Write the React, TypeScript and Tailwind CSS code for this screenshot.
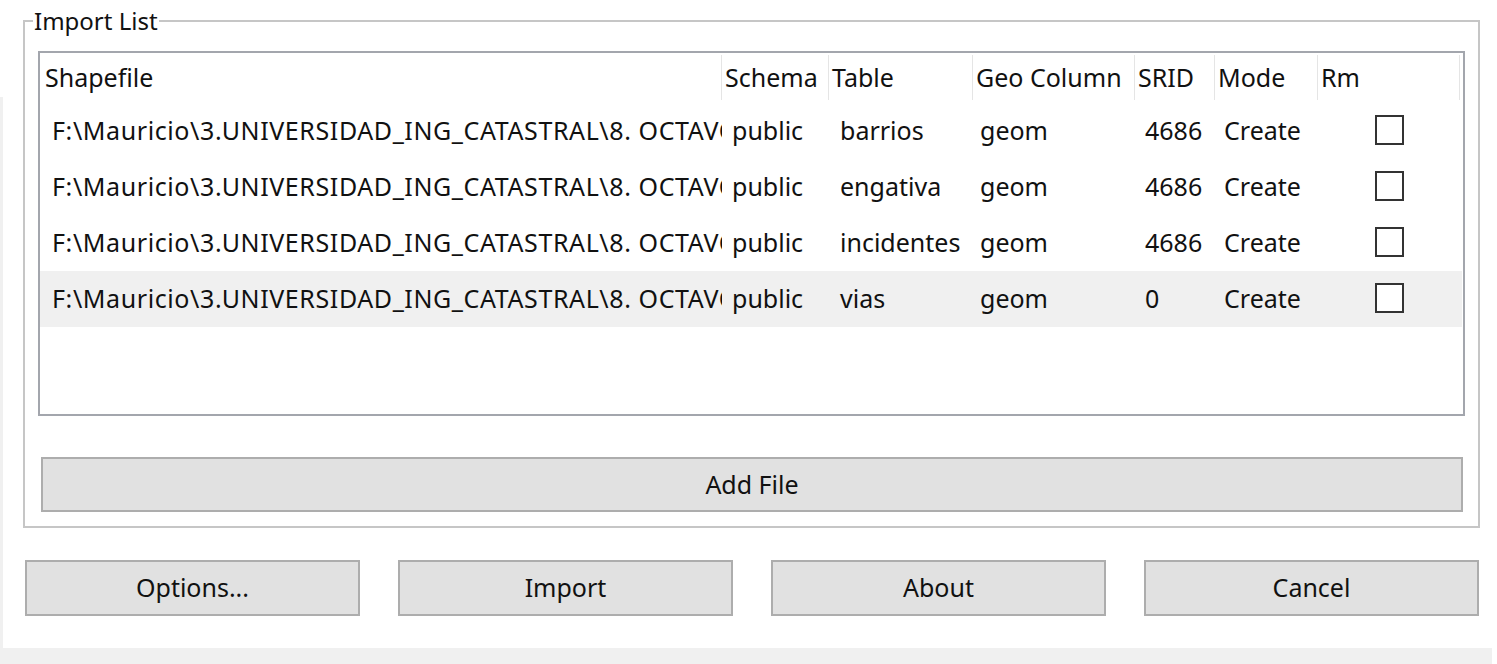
const columns = [
    { name: "Shapefile", width: "w-[682px]", head: "pl-[5px]", cell: "pl-[12px]" },
    { name: "Schema", width: "w-[107px]", head: "pl-[3px]", cell: "pl-[10px]" },
    { name: "Table", width: "w-[144px]", head: "pl-[3px]", cell: "pl-[11px]" },
    { name: "Geo Column", width: "w-[162px]", head: "pl-[3px]", cell: "pl-[7px]" },
    { name: "SRID", width: "w-[80px]", head: "pl-[3px]", cell: "pl-[10px]" },
    { name: "Mode", width: "w-[103px]", head: "pl-[3px]", cell: "pl-[9px]" },
    { name: "Rm", width: "w-[142px]", head: "pl-[3px]", cell: "pl-[57px]" },
];

const path = "F:\\Mauricio\\3.UNIVERSIDAD_ING_CATASTRAL\\8. OCTAVO";

const rows = [
    { table: "barrios", srid: "4686" },
    { table: "engativa", srid: "4686" },
    { table: "incidentes", srid: "4686" },
    { table: "vias", srid: "0" },
];

const bottomButtons = ["Options...", "Import", "About", "Cancel"];

const App = () => {
    return (
        <div className="w-[1497px] h-[664px] bg-white flex flex-col font-['Noto_Sans',sans-serif] text-[25px] text-[#111]">
            <div className="flex h-[648px]">
                {/* left edge strip */}
                <div className="w-[3px] mt-[97px] bg-[#f0f0f0]" />

                <div className="pl-[20px] pt-[7px]">
                    {/* ============ IMPORT LIST GROUP ============ */}
                    <fieldset className="w-[1456px] border-2 border-[#c6c6c6]">
                        <legend className="ml-[8px] px-[1px] leading-[28px] text-[24px]">Import List</legend>
                        <div className="px-[13px] pt-[16px] pb-[14px]">
                            {/* list view */}
                            <div className="w-[1427px] h-[365px] border-2 border-[#a3a6ad] bg-white">
                                <div className="flex pt-[2px] pb-[3px]">
                                    {columns.map((c, i) => (
                                        <div
                                            key={i}
                                            className={`${c.width} ${c.head} h-[45px] flex items-center border-r border-[#e5e5e5] whitespace-nowrap`}
                                        >
                                            {c.name}
                                        </div>
                                    ))}
                                </div>

                                {rows.map((r, i) => (
                                    <div
                                        key={i}
                                        className={`flex h-[56px] mr-[1px] ${i === 3 ? "bg-[#f0f0f0]" : ""}`}
                                    >
                                        <div className={`${columns[0].width} ${columns[0].cell} flex items-center overflow-hidden whitespace-nowrap tracking-[0.6px]`}>
                                            <span className="overflow-hidden">{path}</span>
                                        </div>
                                        <div className={`${columns[1].width} ${columns[1].cell} flex items-center`}>public</div>
                                        <div className={`${columns[2].width} ${columns[2].cell} flex items-center`}>{r.table}</div>
                                        <div className={`${columns[3].width} ${columns[3].cell} flex items-center`}>geom</div>
                                        <div className={`${columns[4].width} ${columns[4].cell} flex items-center`}>{r.srid}</div>
                                        <div className={`${columns[5].width} ${columns[5].cell} flex items-center`}>Create</div>
                                        <div className={`${columns[6].width} ${columns[6].cell} flex items-center`}>
                                            <div className="w-[29px] h-[30px] border-2 border-[#333333] bg-white -mt-[3px]" />
                                        </div>
                                    </div>
                                ))}
                            </div>

                            <button className="mt-[41px] ml-[3px] w-[1422px] h-[55px] bg-[#e1e1e1] border-2 border-[#adadad] flex items-center justify-center">
                                Add File
                            </button>
                        </div>
                    </fieldset>

                    {/* ============ DIALOG BUTTONS ============ */}
                    <div className="flex gap-[38px] mt-[32px] ml-[2px]">
                        {bottomButtons.map((b) => (
                            <button
                                key={b}
                                className="w-[335px] h-[56px] bg-[#e1e1e1] border-2 border-[#adadad] flex items-center justify-center"
                            >
                                {b}
                            </button>
                        ))}
                    </div>
                </div>
            </div>

            {/* bottom strip */}
            <div className="h-[16px] w-[1492px] bg-[#f0f0f0]" />
        </div>
    );
};

export default App;
